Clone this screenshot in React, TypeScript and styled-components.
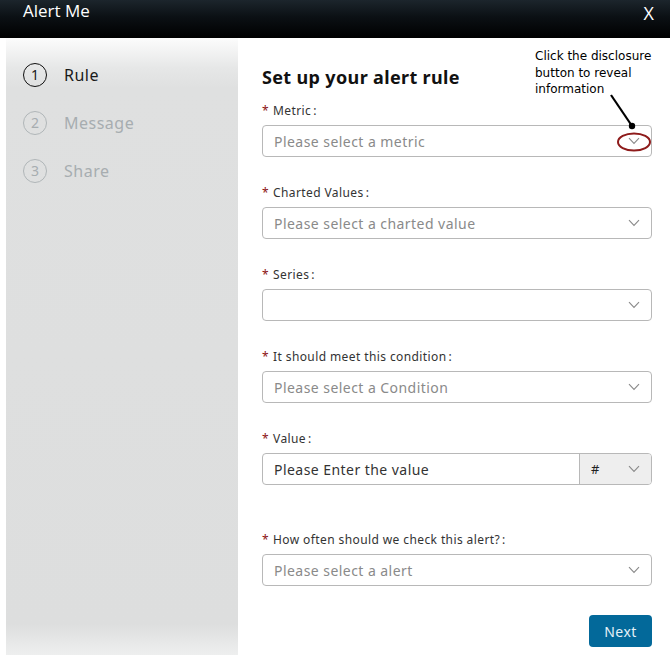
import React from "react";
import styled, { createGlobalStyle } from "styled-components";

const Global = createGlobalStyle`
  html, body { margin: 0; padding: 0; background: #fff; }
  body { font-family: "Open Sans", "Noto Sans", sans-serif; }
  * { box-sizing: border-box; }
`;

const Page = styled.div`
  width: 670px;
  height: 655px;
  overflow: hidden;
  position: relative;
  display: flex;
  flex-direction: column;
`;

const Header = styled.div`
  height: 38px;
  flex: none;
  background: linear-gradient(180deg, #1c252c 0%, #0b1014 45%, #000 100%);
  display: flex;
  align-items: flex-start;
  justify-content: space-between;
  padding: 0 16px 0 23px;
  color: #fff;
`;

const HeaderTitle = styled.div`
  font-family: "Open Sans", sans-serif;
  font-size: 17px;
  line-height: 22px;
`;

const CloseX = styled.div`
  font-family: "Open Sans", sans-serif;
  font-size: 18px;
  line-height: 22px;
  margin-top: 2px;
`;

const Body = styled.div`
  flex: 1;
  display: flex;
  padding-left: 6px;
`;

const Sidebar = styled.div`
  width: 232px;
  flex: none;
  background: linear-gradient(180deg, #fcfcfc 0px, #e6e7e7 30px, #dfe0e0 50px, #dddede 95%, #eeefef 100%);
  padding: 25px 0 0 17px;
  display: flex;
  flex-direction: column;
  gap: 24px;
`;

const Step = styled.div<{ $active?: boolean }>`
  display: flex;
  align-items: center;
  gap: 17px;
  height: 24px;
  color: ${(p) => (p.$active ? "#1a1a1a" : "#a7adb0")};
  font-family: "Noto Sans", "Open Sans", sans-serif;
  font-size: 16px;
  letter-spacing: 0.5px;
`;

const StepCircle = styled.div<{ $active?: boolean }>`
  width: 24px;
  height: 24px;
  border-radius: 50%;
  border: 1.3px solid ${(p) => (p.$active ? "#111" : "#b0b6b8")};
  display: flex;
  align-items: center;
  justify-content: center;
  font-size: 14px;
  letter-spacing: 0;
  line-height: 1;
`;

const Main = styled.div`
  flex: 1;
  padding: 27px 18px 0 24px;
  display: flex;
  flex-direction: column;
`;

const Title = styled.h2`
  margin: 0 0 14px 0;
  font-family: "Noto Sans", "Open Sans", sans-serif;
  font-size: 18px;
  font-weight: 700;
  line-height: 24px;
  letter-spacing: 0.35px;
  color: #111;
`;

const Field = styled.div<{ $gap?: number }>`
  display: flex;
  flex-direction: column;
  margin-bottom: ${(p) => p.$gap ?? 28}px;
`;

const Label = styled.div`
  font-family: "Noto Sans", "Open Sans", sans-serif;
  font-size: 12px;
  line-height: 16px;
  color: #333;
  margin-bottom: 6px;
  letter-spacing: 0.4px;
`;

const Star = styled.span`
  color: #8b1010;
  margin-right: 4px;
`;

const Colon = styled.span`
  margin-left: 2px;
`;

const SelectBox = styled.div`
  height: 32px;
  border: 1px solid #b8b8b8;
  border-radius: 4px;
  display: flex;
  align-items: center;
  padding: 0 11px 0 11px;
  background: #fff;
`;

const Placeholder = styled.div<{ $dark?: boolean }>`
  flex: 1;
  font-family: "Noto Sans", "Open Sans", sans-serif;
  font-size: 14px;
  color: ${(p) => (p.$dark ? "#333" : "#8a8a8a")};
  letter-spacing: 0.45px;
`;

const Group = styled.div`
  height: 32px;
  display: flex;
  border: 1px solid #b8b8b8;
  border-radius: 4px;
  overflow: hidden;
`;

const GroupInput = styled.div`
  flex: 1;
  display: flex;
  align-items: center;
  padding-left: 11px;
`;

const Addon = styled.div`
  width: 72px;
  border-left: 1px solid #b8b8b8;
  background: #eeeeee;
  display: flex;
  align-items: center;
  justify-content: space-between;
  padding: 0 11px 0 11px;
  font-family: "Noto Sans", sans-serif;
  font-size: 13px;
  color: #222;
`;

const Footer = styled.div`
  display: flex;
  justify-content: flex-end;
  margin-top: 29px;
`;

const NextButton = styled.button`
  width: 63px;
  height: 32px;
  border: none;
  border-radius: 4px;
  background: #03699a;
  color: #e6f2f8;
  font-family: "Noto Sans", "Open Sans", sans-serif;
  font-size: 14px;
  letter-spacing: 0.4px;
  padding: 0;
`;

const Note = styled.div`
  position: absolute;
  left: 535px;
  top: 48px;
  width: 132px;
  font-family: "DejaVu Sans", sans-serif;
  font-size: 12px;
  line-height: 16.5px;
  color: #000;
`;

const Overlay = styled.svg`
  position: absolute;
  left: 0;
  top: 0;
  pointer-events: none;
`;

const Chevron = () => (
  <svg width="12" height="8" viewBox="0 0 12 8" fill="none">
    <path d="M1 1.2 L6 6.5 L11 1.2" stroke="#8a8a8a" strokeWidth="1.1" />
  </svg>
);

const Select = ({ text }: { text: string }) => (
  <SelectBox>
    <Placeholder>{text}</Placeholder>
    <Chevron />
  </SelectBox>
);

const FieldLabel = ({ text }: { text: string }) => (
  <Label>
    <Star>*</Star>
    {text}
    <Colon>:</Colon>
  </Label>
);

export default function App() {
  return (
    <Page>
      <Global />
      <Header>
        <HeaderTitle>Alert Me</HeaderTitle>
        <CloseX>X</CloseX>
      </Header>
      <Body>
        <Sidebar>
          <Step $active>
            <StepCircle $active>1</StepCircle>
            Rule
          </Step>
          <Step>
            <StepCircle>2</StepCircle>
            Message
          </Step>
          <Step>
            <StepCircle>3</StepCircle>
            Share
          </Step>
        </Sidebar>
        <Main>
          <Title>Set up your alert rule</Title>
          <Field>
            <FieldLabel text="Metric" />
            <Select text="Please select a metric" />
          </Field>
          <Field>
            <FieldLabel text="Charted Values" />
            <Select text="Please select a charted value" />
          </Field>
          <Field>
            <FieldLabel text="Series" />
            <Select text="" />
          </Field>
          <Field>
            <FieldLabel text="It should meet this condition" />
            <Select text="Please select a Condition" />
          </Field>
          <Field $gap={47}>
            <FieldLabel text="Value" />
            <Group>
              <GroupInput>
                <Placeholder $dark>Please Enter the value</Placeholder>
              </GroupInput>
              <Addon>
                #
                <Chevron />
              </Addon>
            </Group>
          </Field>
          <Field $gap={0}>
            <FieldLabel text="How often should we check this alert?" />
            <Select text="Please select a alert" />
          </Field>
          <Footer>
            <NextButton>Next</NextButton>
          </Footer>
        </Main>
      </Body>
      <Note>Click the disclosure button to reveal information</Note>
      <Overlay width="670" height="655">
        <line x1="611" y1="95" x2="632" y2="126" stroke="#000" strokeWidth="2.2" />
        <circle cx="632" cy="126" r="3.2" fill="#000" />
        <ellipse cx="634" cy="142" rx="16" ry="8.5" fill="none" stroke="#8e1b1b" strokeWidth="2" />
      </Overlay>
    </Page>
  );
}
